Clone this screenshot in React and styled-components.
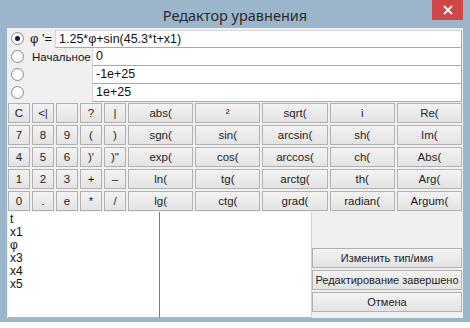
import styled, { createGlobalStyle } from "styled-components"

const GlobalStyle = createGlobalStyle`
  body {
    margin: 0;
    background: #ffffff;
    font-family: "Liberation Sans", Arial, sans-serif;
  }
`

// window frame
const Screen = styled.div`
  width: 470px;
  height: 328px;
  background: #ffffff;
  overflow: hidden;
`
const Window = styled.div`
  width: 470px;
  height: 322px;
  box-sizing: border-box;
  background: #9bb6ca;
  padding: 0 7px 4px 7px;
  display: flex;
  flex-direction: column;
`
const TitleBar = styled.div`
  height: 28px;
  display: grid;
  grid-template-columns: 1fr auto 1fr;
`
const Title = styled.div`
  grid-column: 2;
  align-self: center;
  padding-top: 2px;
  font-family: "Noto Sans", "Open Sans", sans-serif;
  font-size: 14.5px;
  color: #2a2a2a;
`
const Close = styled.div`
  grid-column: 3;
  justify-self: end;
  width: 31px;
  height: 20px;
  background: #cf4848;
  display: flex;
  align-items: center;
  justify-content: center;
`
const Client = styled.div`
  flex: 1;
  background: #f0f0f0;
  padding: 2px 1px 0 1px;
  display: flex;
  flex-direction: column;
`

// equation rows
const EqRow = styled.div`
  height: 18px;
  display: flex;
  margin-left: -1px;
`
const Radio = styled.div`
  width: 13px;
  height: 13px;
  box-sizing: border-box;
  margin: 2px 0 0 4px;
  border-radius: 50%;
  border: 1px solid #8c8c8c;
  background: radial-gradient(circle, #ffffff 55%, #ececec);
  display: flex;
  align-items: center;
  justify-content: center;
  &::after {
    content: "";
    width: 5px;
    height: 5px;
    border-radius: 50%;
    background: ${(p) => (p.checked ? "#1b1b1b" : "transparent")};
  }
`
const Label = styled.div`
  width: ${(p) => p.w}px;
  box-sizing: border-box;
  padding-left: ${(p) => p.pad}px;
  font-size: ${(p) => p.size || 13}px;
  line-height: 18px;
  color: #111;
  white-space: nowrap;
`
const Field = styled.div`
  flex: 1;
  background: #fff;
  border-left: 1px solid #d6d6d6;
  border-right: 1px solid #a4a4a4;
  border-bottom: 1px solid #a9a9a9;
  border-top: ${(p) => (p.first ? "1px solid #d6d6d6" : "none")};
  padding-left: 3px;
  font-size: 12.5px;
  line-height: 17px;
  color: #111;
`

// keypad
const Keypad = styled.div`
  margin-top: 1px;
  display: grid;
  grid-template-columns: repeat(5, 22px) repeat(5, 1fr);
  grid-auto-rows: 20px;
  gap: 2px;
`
const Key = styled.button`
  margin: 0;
  padding: 0;
  border: 1px solid #b2b2b2;
  background: linear-gradient(#f3f3f3, #e3e3e3);
  font-family: "Liberation Sans", Arial, sans-serif;
  font-size: 11.5px;
  color: #1e1e1e;
  white-space: nowrap;
`

// bottom part
const Bottom = styled.div`
  margin-top: 1px;
  flex: 1;
  display: grid;
  grid-template-columns: 152px 152px 1fr;
`
const List = styled.div`
  background: #fff;
  border-right: 1px solid ${(p) => p.edge};
  border-bottom: 1px solid #b5b5b5;
  padding: 1px 0 0 2px;
  font-size: 12px;
  line-height: 13px;
  color: #111;
`
const Actions = styled.div`
  display: flex;
  flex-direction: column;
  justify-content: flex-end;
  gap: 2px;
  padding-bottom: 6px;
`
const Action = styled(Key)`
  height: 20px;
  font-size: 11px;
`

const keys = [
  ["C", "<|", "", "?", "|", "abs(", "²", "sqrt(", "i", "Re("],
  ["7", "8", "9", "(", ")", "sgn(", "sin(", "arcsin(", "sh(", "Im("],
  ["4", "5", "6", ")'", ")\"", "exp(", "cos(", "arccos(", "ch(", "Abs("],
  ["1", "2", "3", "+", "–", "ln(", "tg(", "arctg(", "th(", "Arg("],
  ["0", ".", "e", "*", "/", "lg(", "ctg(", "grad(", "radian(", "Argum("],
]

const vars = ["t", "x1", "φ", "x3", "x4", "x5"]

export default function App() {
  return (
    <Screen>
      <GlobalStyle />
      <Window>
        <TitleBar>
          <Title>Редактор уравнения</Title>
          <Close>
            <svg width="10" height="10" viewBox="0 0 10 10">
              <path d="M1 1 L9 9 M9 1 L1 9" stroke="#fff" strokeWidth="1.8" />
            </svg>
          </Close>
        </TitleBar>
        <Client>
          <EqRow>
            <Radio checked />
            <Label w={31} pad={6}>φ '=</Label>
            <Field first>1.25*φ+sin(45.3*t+x1)</Field>
          </EqRow>
          <EqRow>
            <Radio />
            <Label w={68} pad={8} size={11.5}>Начальное</Label>
            <Field>0</Field>
          </EqRow>
          <EqRow>
            <Radio />
            <Label w={68} pad={8} />
            <Field>-1e+25</Field>
          </EqRow>
          <EqRow>
            <Radio />
            <Label w={68} pad={8} />
            <Field>1e+25</Field>
          </EqRow>

          <Keypad>
            {keys.flat().map((k, i) => (
              <Key key={i}>{k}</Key>
            ))}
          </Keypad>

          <Bottom>
            <List edge="#7c7c7c">
              {vars.map((v) => (
                <div key={v}>{v}</div>
              ))}
            </List>
            <List edge="#d0d0d0" />
            <Actions>
              <Action>Изменить тип/имя</Action>
              <Action>Редактирование завершено</Action>
              <Action>Отмена</Action>
            </Actions>
          </Bottom>
        </Client>
      </Window>
    </Screen>
  )
}
